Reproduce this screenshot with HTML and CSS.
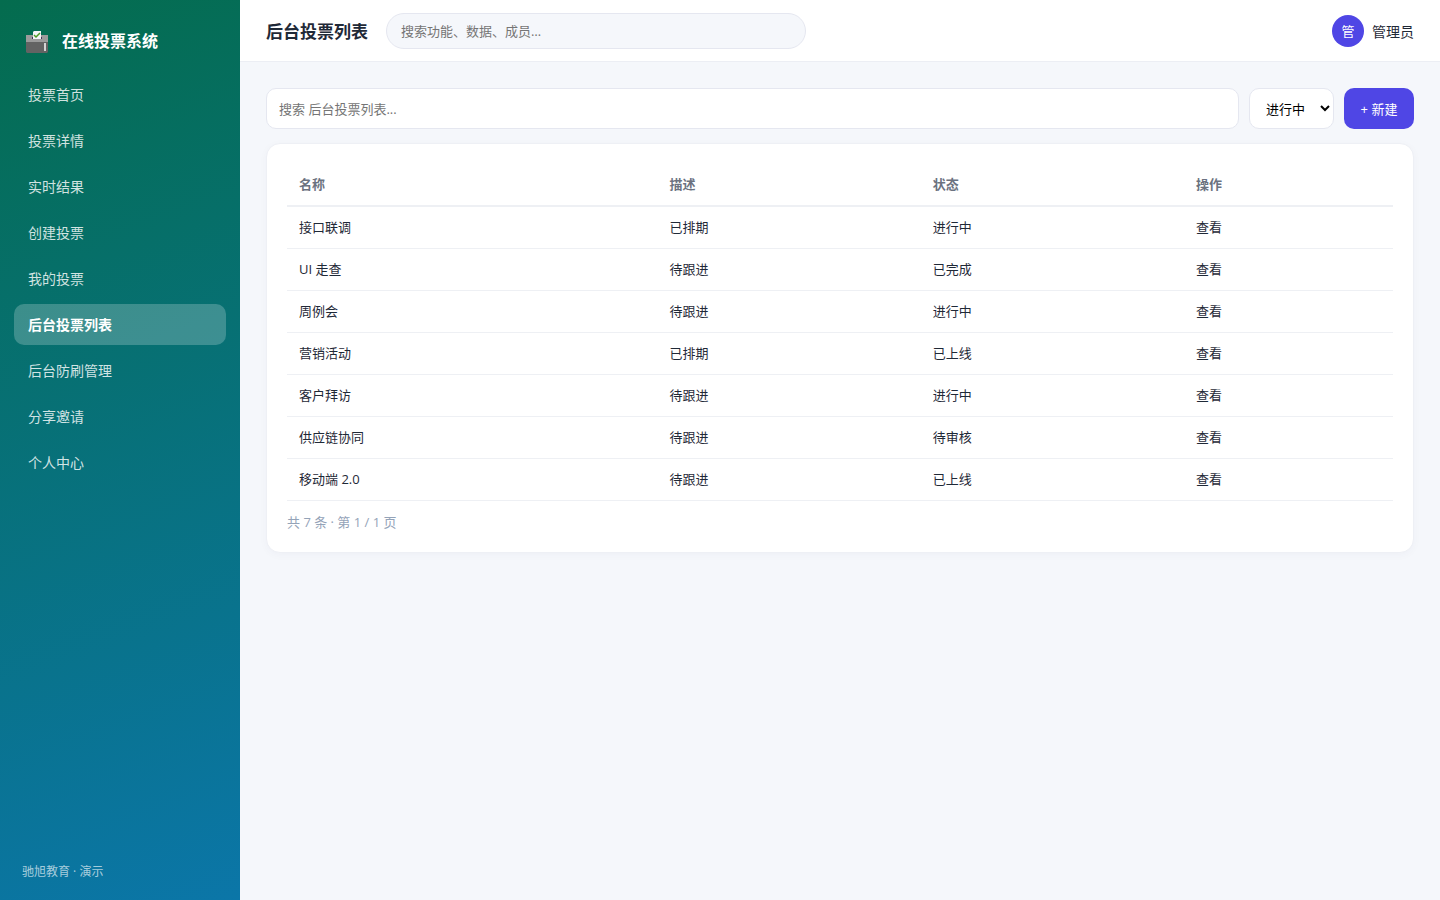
FILE: index.html
```
<!DOCTYPE html>
<html lang="zh-CN">
<head>
  <meta charset="UTF-8">
  <meta name="viewport" content="width=device-width, initial-scale=1.0">
  <title>后台投票列表</title>
  <link rel="stylesheet" href="styles.css">
</head>
<body>

  <!-- 侧边栏 -->
  <aside class="sidebar">
    <div class="brand">
      <svg class="logo" viewBox="0 -4 22 26" aria-hidden="true">
        <path d="M0 4h22v7H0z" fill="#9b9b9b"/>
        <path d="M0 11h22v10l-1 1H1l-1-1z" fill="#636363"/>
        <path d="M6 6h10v2H6z" fill="#43335a"/>
        <path d="M7 1l1-1h7v8H7z" fill="#f5f5f7"/>
        <path d="M8 4l2 2 4-4" fill="none" stroke="#4b9b24" stroke-width="1.5"/>
        <path d="M18 12h2v8h-2z" fill="#d4d4d4"/>
      </svg>
      <span>在线投票系统</span>
    </div>
    <nav class="menu">
      <a href="#">投票首页</a>
      <a href="#">投票详情</a>
      <a href="#">实时结果</a>
      <a href="#">创建投票</a>
      <a href="#">我的投票</a>
      <a href="#" class="active">后台投票列表</a>
      <a href="#">后台防刷管理</a>
      <a href="#">分享邀请</a>
      <a href="#">个人中心</a>
    </nav>
    <div class="side-foot">驰旭教育 · 演示</div>
  </aside>

  <div class="main">
    <!-- 顶栏 -->
    <header class="topbar">
      <h1>后台投票列表</h1>
      <input class="global-search" type="search" aria-label="全局搜索" placeholder="搜索功能、数据、成员…">
      <div class="user">
        <span class="avatar">管</span>
        <span>管理员</span>
      </div>
    </header>

    <main class="content">
      <div class="toolbar">
        <input type="search" aria-label="搜索列表" placeholder="搜索 后台投票列表...">
        <select aria-label="状态">
          <option>进行中</option>
          <option>已完成</option>
        </select>
        <button type="button">+ 新建</button>
      </div>

      <!-- 投票列表 -->
      <section class="card">
        <table>
          <thead>
            <tr><th class="col-name">名称</th><th class="col-mid">描述</th><th class="col-mid">状态</th><th>操作</th></tr>
          </thead>
          <tbody>
            <tr><td>接口联调</td><td>已排期</td><td>进行中</td><td><a href="#">查看</a></td></tr>
            <tr><td>UI 走查</td><td>待跟进</td><td>已完成</td><td><a href="#">查看</a></td></tr>
            <tr><td>周例会</td><td>待跟进</td><td>进行中</td><td><a href="#">查看</a></td></tr>
            <tr><td>营销活动</td><td>已排期</td><td>已上线</td><td><a href="#">查看</a></td></tr>
            <tr><td>客户拜访</td><td>待跟进</td><td>进行中</td><td><a href="#">查看</a></td></tr>
            <tr><td>供应链协同</td><td>待跟进</td><td>待审核</td><td><a href="#">查看</a></td></tr>
            <tr><td>移动端 2.0</td><td>待跟进</td><td>已上线</td><td><a href="#">查看</a></td></tr>
          </tbody>
        </table>
        <div class="pager">共 7 条 · 第 1 / 1 页</div>
      </section>
    </main>
  </div>

</body>
</html>
```
FILE: styles.css
```
* {
  box-sizing: border-box;
}

body {
  margin: 0;
  min-height: 100vh;
  display: flex;
  font-family: "Open Sans", "Noto Sans CJK SC", sans-serif;
  font-size: 14px;
  color: #1f2937;
  background: #f5f7fb;
}

input, select, button {
  font-family: inherit;
  font-size: 13px;
}

a {
  color: inherit;
  text-decoration: none;
}

/* 侧边栏 */
.sidebar {
  width: 240px;
  flex-shrink: 0;
  display: flex;
  flex-direction: column;
  padding: 22px 14px 20px;
  color: #fff;
  background: linear-gradient(160deg, #046c4e, #0b76a8);
}

.brand {
  display: flex;
  align-items: center;
  gap: 14px;
  height: 36px;
  padding: 0 12px;
  margin-bottom: 16px;
  font-size: 16px;
  font-weight: bold;
}

.logo {
  width: 22px;
  height: 26px;
}

.menu {
  display: flex;
  flex-direction: column;
  gap: 5px;
}

.menu a {
  padding: 11px 14px;
  line-height: 19px;
  border-radius: 10px;
  color: rgba(255, 255, 255, 0.82);
}

.menu a.active {
  background: rgba(255, 255, 255, 0.22);
  color: #fff;
  font-weight: bold;
}

.side-foot {
  margin-top: auto;
  padding: 0 8px;
  font-size: 12px;
  line-height: 16px;
  color: rgba(255, 255, 255, 0.65);
}

.main {
  flex: 1;
  min-width: 0;
}

/* 顶栏 */
.topbar {
  display: flex;
  align-items: center;
  gap: 18px;
  height: 62px;
  padding: 0 26px;
  background: #fff;
  border-bottom: 1px solid #eceef4;
}

.topbar h1 {
  margin: 0;
  font-size: 17px;
  white-space: nowrap;
}

.global-search {
  flex: 0 1 420px;
  min-width: 0;
  height: 36px;
  padding: 0 14px;
  border: 1px solid #e5e7f0;
  border-radius: 18px;
  background: #f5f7fb;
}

.user {
  display: flex;
  align-items: center;
  gap: 8px;
  margin-left: auto;
  white-space: nowrap;
}

.avatar {
  display: flex;
  align-items: center;
  justify-content: center;
  width: 32px;
  height: 32px;
  border-radius: 50%;
  background: #4f46e5;
  color: #fff;
  font-size: 13px;
}

.content {
  padding: 26px;
}

.toolbar {
  display: flex;
  gap: 10px;
  height: 41px;
  margin-bottom: 14px;
}

.toolbar input {
  flex: 1;
  min-width: 0;
  padding: 0 12px;
  border: 1px solid #e5e7f0;
  border-radius: 10px;
  background: #fff;
}

.toolbar select {
  width: 85px;
  padding: 0 0 0 12px;
  border: 1px solid #e5e7f0;
  border-radius: 10px;
  background: #fff;
  color: #000;
}

.toolbar button {
  width: 70px;
  padding: 0;
  border: none;
  border-radius: 10px;
  background: #4f46e5;
  color: #fff;
  cursor: pointer;
}

/* 列表卡片 */
.card {
  padding: 20px;
  border: 1px solid #eef0f5;
  border-radius: 14px;
  background: #fff;
  box-shadow: 0 2px 8px rgba(30, 41, 80, 0.03);
}

table {
  width: 100%;
  border-collapse: separate;
  border-spacing: 0;
  table-layout: fixed;
  font-size: 13px;
  line-height: 19px;
}

th, td {
  padding: 11px 12px;
  text-align: left;
  border-bottom: 1px solid #eef0f4;
}

th {
  border-bottom-width: 2px;
  color: #6b7280;
}

.col-name {
  width: 33.5%;
}

.col-mid {
  width: 23.8%;
}

.pager {
  margin-top: 12px;
  font-size: 13px;
  line-height: 19px;
  color: #94a3b8;
}
```
